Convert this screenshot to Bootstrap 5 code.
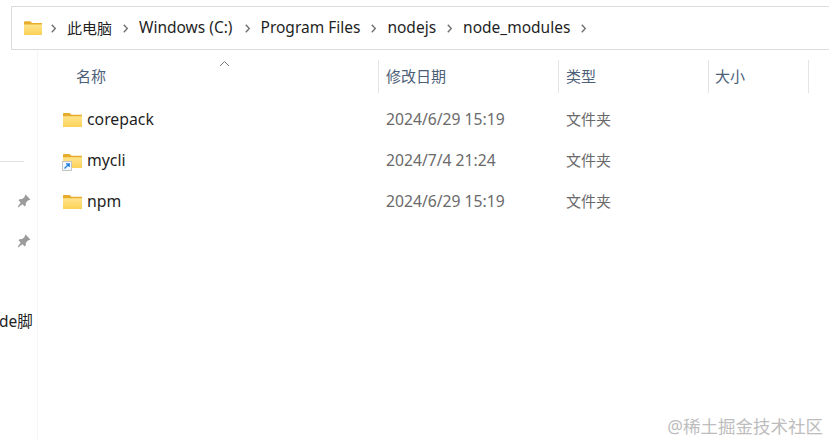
<!DOCTYPE html>
<html lang="zh-CN">
<head>
    <meta charset="UTF-8">
    <meta name="viewport" content="width=device-width, initial-scale=1.0">
    <title>node_modules</title>
    <link href="https://cdn.jsdelivr.net/npm/bootstrap@5.3.3/dist/css/bootstrap.min.css" rel="stylesheet">
    <style>
        body {
            width: 829px;
            height: 441px;
            overflow: hidden;
            background: #fff;
            color: #1f1f1f;
            font-family: "Noto Sans", "Noto Sans CJK SC", sans-serif;
            font-size: 15.5px;
        }

        /* address bar */
        .addr-bar {
            height: 44px;
            margin: 6px 0 0 11px;
            padding-left: 12px;
            border: 1px solid #dcdcdc;
            border-right: 0;
        }
        .addr-sep { width: 5px; height: 9px; margin: 0 11px 0 11px; flex: none; }
        .addr-sep-first { margin: 0 11px 0 9px; }
        .addr-sep-wide { margin: 0 11px 0 12px; }
        .addr-cjk { font-size: 15px; }

        /* left nav strip */
        .nav-strip {
            width: 38px;
            height: 391px;
            border-right: 1px solid #f5f5f5;
            overflow: hidden;
        }
        .nav-rule { width: 24px; height: 1px; background: #e2e2e2; margin-top: 111px; }
        .nav-pin { margin: 32px 0 0 17px; display: block; }
        .nav-pin-next { margin-top: 26px; }
        .nav-label { margin: 63px 0 0 -1px; line-height: 20px; white-space: nowrap; color: #222; }

        /* file list */
        .col-name { width: 341px; padding-left: 38px; position: relative; }
        .col-date { width: 180px; padding-left: 7px; }
        .col-type { width: 150px; padding-left: 7px; }
        .col-size { width: 100px; padding-left: 6px; }
        .list-head {
            height: 33px;
            margin-top: 10px;
            color: #4d6079;
            font-size: 15px;
        }
        .list-head > div { height: 33px; line-height: 33px; border-right: 1px solid #e4e4e4; }
        .sort-mark { position: absolute; left: 181px; top: 0; width: 11px; height: 7px; }
        .file-rows { margin-top: 6px; }
        .file-row { height: 41px; font-size: 15.8px; }
        .file-row .col-name { padding-left: 25px; display: flex; align-items: center; gap: 5px; }
        .file-meta { color: #6a6a6a; font-size: 15.7px; }
        .file-kind { color: #6a6a6a; font-size: 15px; }
        .folder-wrap { position: relative; width: 19px; height: 14px; flex: none; }
        .link-badge { position: absolute; left: -1px; bottom: -3px; }

        .site-mark {
            position: absolute;
            right: 6px;
            bottom: 4px;
            color: #bdbdbd;
            font-size: 17.5px;
            line-height: 22px;
        }
    </style>
</head>
<body class="position-relative">

    <svg width="0" height="0" class="position-absolute">
        <defs>
            <linearGradient id="folderFill" x1="0" y1="0" x2="0" y2="1">
                <stop offset="0" stop-color="#ffe48c"/>
                <stop offset="1" stop-color="#fbd258"/>
            </linearGradient>
            <symbol id="folder" viewBox="0 0 19 14">
                <path d="M0 1C0 .4.4 0 1 0h5.500l2 1.800H19V13a1 1 0 0 1-1 1H1a1 1 0 0 1-1-1Z" fill="#e8ac2c"/>
                <path d="M0 3.200h19V13a1 1 0 0 1-1 1H1a1 1 0 0 1-1-1Z" fill="url(#folderFill)"/>
            </symbol>
            <symbol id="chev" viewBox="0 0 5 9">
                <path d="M.8.8l3.500 3.700-3.500 3.700" fill="none" stroke="#6f6f6f" stroke-width="1.400"/>
            </symbol>
            <symbol id="pin" viewBox="0 0 14 14">
                <path d="M8.600.6l4.800 4.800-1.500.9-1 .1-2 2.400-.2 2.700-1 1-2.200-2.300L1 13.400l-.4-.4 3.100-4.600-2.200-2.200 1-1 2.700-.2 2.400-2 .1-1Z" fill="#9b9b9b"/>
            </symbol>
        </defs>
    </svg>

    <!-- address bar -->
    <div class="addr-bar d-flex align-items-center">
        <svg width="18" height="14" class="flex-shrink-0"><use href="#folder"/></svg>
        <svg class="addr-sep addr-sep-first"><use href="#chev"/></svg>
        <span class="addr-cjk">此电脑</span>
        <svg class="addr-sep"><use href="#chev"/></svg>
        <span>Windows (C:)</span>
        <svg class="addr-sep addr-sep-wide"><use href="#chev"/></svg>
        <span>Program Files</span>
        <svg class="addr-sep"><use href="#chev"/></svg>
        <span>nodejs</span>
        <svg class="addr-sep"><use href="#chev"/></svg>
        <span>node_modules</span>
        <svg class="addr-sep"><use href="#chev"/></svg>
    </div>

    <div class="d-flex">
        <!-- left nav, mostly cropped away -->
        <div class="nav-strip flex-shrink-0">
            <div class="nav-rule"></div>
            <svg class="nav-pin" width="14" height="14"><use href="#pin"/></svg>
            <svg class="nav-pin nav-pin-next" width="14" height="14"><use href="#pin"/></svg>
            <div class="nav-label">de脚</div>
        </div>

        <div class="flex-grow-1">
            <div class="list-head d-flex">
                <div class="col-name">名称
                    <svg class="sort-mark" viewBox="0 0 11 7"><path d="M1 6l4.500-4.500L10 6" fill="none" stroke="#777" stroke-width="1"/></svg>
                </div>
                <div class="col-date">修改日期</div>
                <div class="col-type">类型</div>
                <div class="col-size">大小</div>
            </div>

            <div class="file-rows">
                <div class="file-row d-flex align-items-center">
                    <div class="col-name">
                        <span class="folder-wrap"><svg width="19" height="14" class="d-block"><use href="#folder"/></svg></span>
                        <span>corepack</span>
                    </div>
                    <div class="col-date file-meta">2024/6/29 15:19</div>
                    <div class="col-type file-kind">文件夹</div>
                </div>
                <div class="file-row d-flex align-items-center">
                    <div class="col-name">
                        <span class="folder-wrap">
                            <svg width="19" height="14" class="d-block"><use href="#folder"/></svg>
                            <svg class="link-badge" width="10" height="10" viewBox="0 0 10 10">
                                <rect x=".5" y=".5" width="9" height="9" fill="#f4f9ff" stroke="#c4c4c4"/>
                                <path d="M2.500 7.500L7 3M4 2.800h3.200V6" fill="none" stroke="#1f7fd6" stroke-width="1.300"/>
                            </svg>
                        </span>
                        <span>mycli</span>
                    </div>
                    <div class="col-date file-meta">2024/7/4 21:24</div>
                    <div class="col-type file-kind">文件夹</div>
                </div>
                <div class="file-row d-flex align-items-center">
                    <div class="col-name">
                        <span class="folder-wrap"><svg width="19" height="14" class="d-block"><use href="#folder"/></svg></span>
                        <span>npm</span>
                    </div>
                    <div class="col-date file-meta">2024/6/29 15:19</div>
                    <div class="col-type file-kind">文件夹</div>
                </div>
            </div>
        </div>
    </div>

    <div class="site-mark">@稀土掘金技术社区</div>

    <script src="https://cdn.jsdelivr.net/npm/bootstrap@5.3.3/dist/js/bootstrap.bundle.min.js"></script>
</body>
</html>
